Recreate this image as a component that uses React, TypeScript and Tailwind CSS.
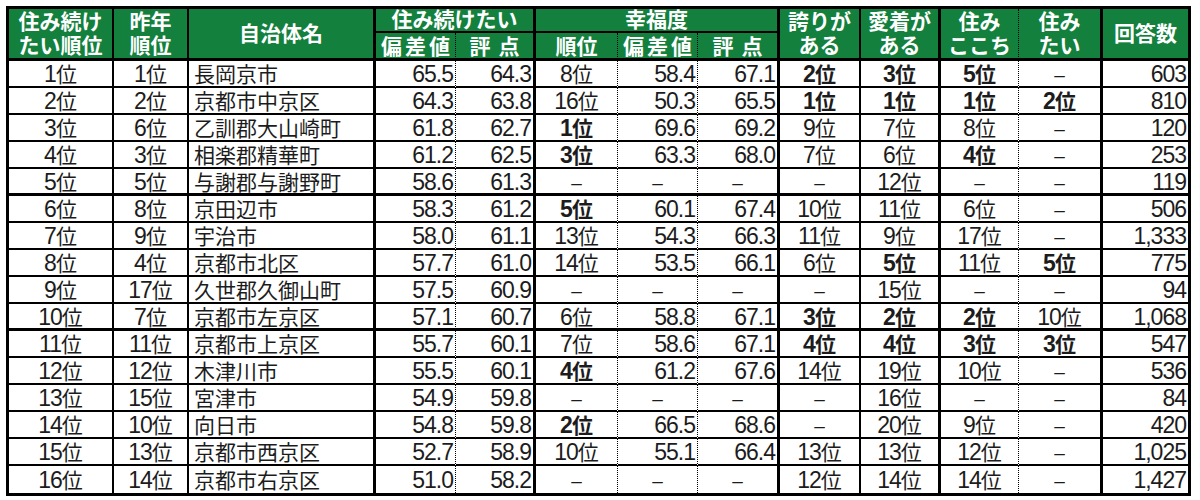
import React from "react";

type Row = string[];

const rows: Row[] = [
  ["1位", "1位", "長岡京市", "65.5", "64.3", "8位", "58.4", "67.1", "*2位", "*3位", "*5位", "－", "603"],
  ["2位", "2位", "京都市中京区", "64.3", "63.8", "16位", "50.3", "65.5", "*1位", "*1位", "*1位", "*2位", "810"],
  ["3位", "6位", "乙訓郡大山崎町", "61.8", "62.7", "*1位", "69.6", "69.2", "9位", "7位", "8位", "－", "120"],
  ["4位", "3位", "相楽郡精華町", "61.2", "62.5", "*3位", "63.3", "68.0", "7位", "6位", "*4位", "－", "253"],
  ["5位", "5位", "与謝郡与謝野町", "58.6", "61.3", "－", "－", "－", "－", "12位", "－", "－", "119"],
  ["6位", "8位", "京田辺市", "58.3", "61.2", "*5位", "60.1", "67.4", "10位", "11位", "6位", "－", "506"],
  ["7位", "9位", "宇治市", "58.0", "61.1", "13位", "54.3", "66.3", "11位", "9位", "17位", "－", "1,333"],
  ["8位", "4位", "京都市北区", "57.7", "61.0", "14位", "53.5", "66.1", "6位", "*5位", "11位", "*5位", "775"],
  ["9位", "17位", "久世郡久御山町", "57.5", "60.9", "－", "－", "－", "－", "15位", "－", "－", "94"],
  ["10位", "7位", "京都市左京区", "57.1", "60.7", "6位", "58.8", "67.1", "*3位", "*2位", "*2位", "10位", "1,068"],
  ["11位", "11位", "京都市上京区", "55.7", "60.1", "7位", "58.6", "67.1", "*4位", "*4位", "*3位", "*3位", "547"],
  ["12位", "12位", "木津川市", "55.5", "60.1", "*4位", "61.2", "67.6", "14位", "19位", "10位", "－", "536"],
  ["13位", "15位", "宮津市", "54.9", "59.8", "－", "－", "－", "－", "16位", "－", "－", "84"],
  ["14位", "10位", "向日市", "54.8", "59.8", "*2位", "66.5", "68.6", "－", "20位", "9位", "－", "420"],
  ["15位", "13位", "京都市西京区", "52.7", "58.9", "10位", "55.1", "66.4", "13位", "13位", "12位", "－", "1,025"],
  ["16位", "14位", "京都市右京区", "51.0", "58.2", "－", "－", "－", "12位", "14位", "14位", "－", "1,427"],
];

const rightBorder = [
  "border-r-2",
  "border-r-2",
  "border-r-[3px]",
  "border-r [border-right-style:dotted]",
  "border-r-[3px]",
  "border-r [border-right-style:dotted]",
  "border-r [border-right-style:dotted]",
  "border-r-[3px]",
  "border-r-2",
  "border-r-[3px]",
  "border-r [border-right-style:dotted]",
  "border-r-[3px]",
  "",
];

const align = [
  "justify-center",
  "justify-center",
  "justify-start pl-[5px]",
  "justify-end pr-[2px]",
  "justify-end pr-[2px]",
  "justify-center",
  "justify-end pr-[2px]",
  "justify-end pr-[2px]",
  "justify-center",
  "justify-center",
  "justify-center",
  "justify-center",
  "justify-end pr-[2px]",
];

const hdr =
  "flex items-center justify-center bg-[#13803d] text-white font-bold text-[21px] leading-[24px] text-center border-black";

function CellText({ text }: { text: string }) {
  if (text === "－") return <span className="text-[19px]">–</span>;
  if (text.endsWith("位")) {
    return (
      <>
        <span className="text-[23px] tracking-[-1px]">{text.slice(0, -1)}</span>
        <span className="text-[21px]">位</span>
      </>
    );
  }
  if (/^[0-9.,]+$/.test(text)) {
    return <span className="text-[23px] tracking-[-1px]">{text}</span>;
  }
  return <span className="text-[21px]">{text}</span>;
}

export default function App() {
  return (
    <div className="bg-white w-[1200px] h-[500px] pt-[6px] pl-[6px]">
      <div
        className="grid w-fit border-[3px] border-black text-[#1c1c1c] grid-cols-[105px_75px_187px_80px_80px_82px_80px_82px_81px_80px_78px_84px_85px] grid-rows-[24px_28px_repeat(16,27px)]"
        style={{ fontFamily: '"Liberation Sans", "Noto Sans CJK JP", sans-serif' }}
      >
        {/* header row 1 */}
        <div className={`${hdr} row-span-2 border-r-2 border-b-[3px]`}>
          <span>住み続け<br />たい順位</span>
        </div>
        <div className={`${hdr} row-span-2 border-r-2 border-b-[3px]`}>
          <span>昨年<br />順位</span>
        </div>
        <div className={`${hdr} row-span-2 border-r-[3px] border-b-[3px]`}>自治体名</div>
        <div className={`${hdr} col-span-2 border-r-[3px] border-b-2`}>住み続けたい</div>
        <div className={`${hdr} col-span-3 border-r-[3px] border-b-2`}>幸福度</div>
        <div className={`${hdr} row-span-2 border-r-2 border-b-[3px]`}>
          <span>誇りが<br />ある</span>
        </div>
        <div className={`${hdr} row-span-2 border-r-[3px] border-b-[3px]`}>
          <span>愛着が<br />ある</span>
        </div>
        <div className={`${hdr} row-span-2 border-r [border-right-style:dotted] border-b-[3px]`}>
          <span>住み<br />ここち</span>
        </div>
        <div className={`${hdr} row-span-2 border-r-[3px] border-b-[3px]`}>
          <span>住み<br />たい</span>
        </div>
        <div className={`${hdr} row-span-2 border-b-[3px]`}>回答数</div>
        {/* header row 2 */}
        <div className={`${hdr} border-r [border-right-style:dotted] border-b-[3px] pt-[2px]`}>
          <span className="tracking-[3px] pl-[3px]">偏差値</span>
        </div>
        <div className={`${hdr} border-r-[3px] border-b-[3px] pt-[2px]`}>
          <span className="tracking-[8px] pl-[8px]">評点</span>
        </div>
        <div className={`${hdr} border-r [border-right-style:dotted] border-b-[3px] pt-[2px]`}>順位</div>
        <div className={`${hdr} border-r [border-right-style:dotted] border-b-[3px] pt-[2px]`}>
          <span className="tracking-[3px] pl-[3px]">偏差値</span>
        </div>
        <div className={`${hdr} border-r-[3px] border-b-[3px] pt-[2px]`}>
          <span className="tracking-[8px] pl-[8px]">評点</span>
        </div>

        {/* data */}
        {rows.map((r, ri) => {
          const bottom =
            ri === rows.length - 1 ? "" : ri === 4 || ri === 9 ? "border-b-[3px]" : "border-b-2";
          return r.map((c, ci) => {
            const bold = c.startsWith("*");
            const text = bold ? c.slice(1) : c;
            const isDash = text === "－";
            return (
              <div
                key={`${ri}-${ci}`}
                className={`flex items-center pt-[2px] leading-none whitespace-nowrap border-black ${rightBorder[ci]} ${bottom} ${isDash ? "justify-center" : align[ci]} ${bold ? "font-bold" : ""}`}
              >
                <CellText text={text} />
              </div>
            );
          });
        })}
      </div>
    </div>
  );
}
